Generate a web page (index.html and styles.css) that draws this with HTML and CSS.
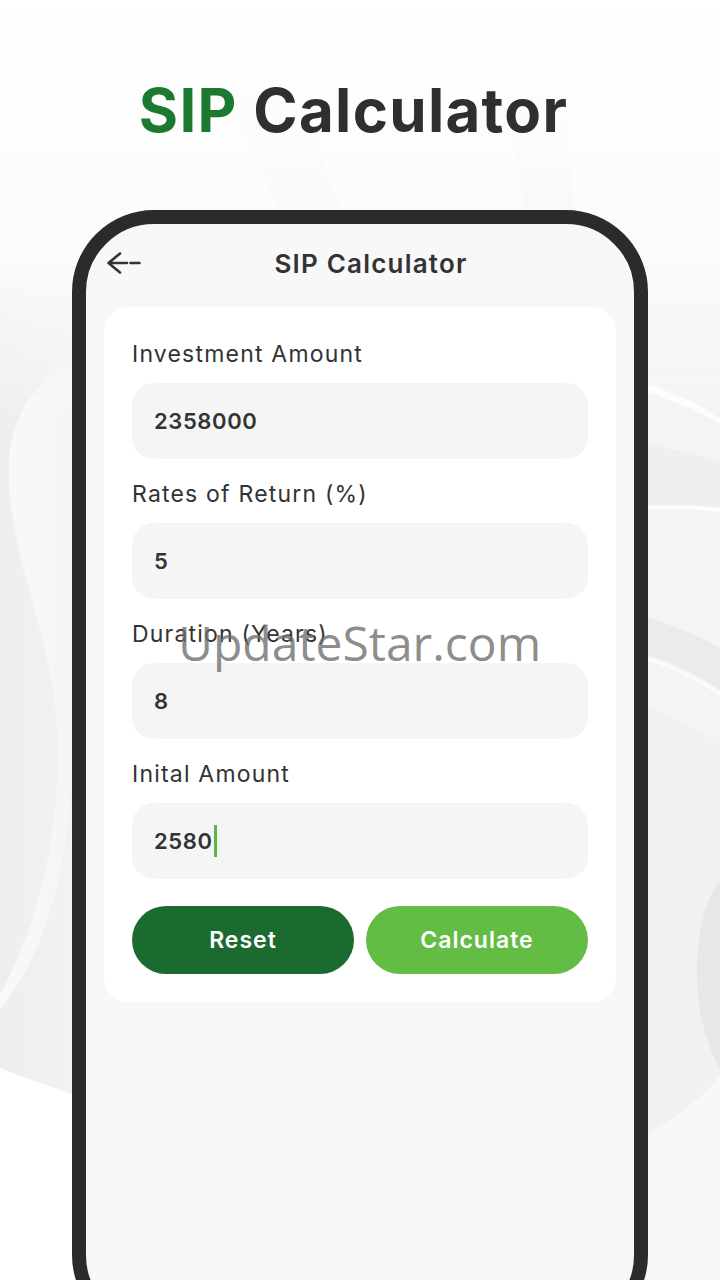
FILE: index.html
```html
<!DOCTYPE html>
<html lang="en">
<head>
<meta charset="utf-8">
<title>SIP Calculator</title>
<link rel="stylesheet" href="styles.css">
</head>
<body>
<svg class="bg" width="720" height="1280" viewBox="0 0 720 1280" aria-hidden="true">
  <defs>
    <linearGradient id="fadeGrad" gradientUnits="userSpaceOnUse" x1="0" y1="260" x2="0" y2="420">
      <stop offset="0" stop-color="#000"/>
      <stop offset="1" stop-color="#fff"/>
    </linearGradient>
    <mask id="fade">
      <rect width="720" height="1280" fill="url(#fadeGrad)"/>
    </mask>
    <linearGradient id="gt" x1="0" y1="0" x2="0" y2="1">
      <stop offset="0" stop-color="#ffffff"/>
      <stop offset="0.3" stop-color="#f9f9f9"/>
      <stop offset="1" stop-color="#f7f7f8"/>
    </linearGradient>
    <linearGradient id="gl" x1="0" y1="0" x2="1" y2="0">
      <stop offset="0" stop-color="#eeeeef"/>
      <stop offset="1" stop-color="#f3f3f4"/>
    </linearGradient>
    <linearGradient id="gs" x1="0" y1="0" x2="1" y2="0">
      <stop offset="0" stop-color="#f9f9f9"/>
      <stop offset="1" stop-color="#f5f5f6"/>
    </linearGradient>
    <linearGradient id="gd" x1="0" y1="0" x2="0" y2="1">
      <stop offset="0" stop-color="#ffffff" stop-opacity="0"/>
      <stop offset="1" stop-color="#f3f3f4"/>
    </linearGradient>
  </defs>
  <rect width="720" height="1280" fill="url(#gt)"/>
  <path d="M170 0 C210 60 250 140 300 260 L360 260 C320 150 280 60 250 0 Z" fill="url(#gd)" opacity="0.6"/>
  <path d="M470 0 C500 60 520 150 530 260 L580 260 C570 150 555 60 540 0 Z" fill="url(#gd)" opacity="0.6"/>
  <g mask="url(#fade)">
    <path d="M0 260 L90 260 L90 1100 C60 1090 30 1080 0 1068 Z" fill="url(#gl)"/>
    <path d="M72 362 C40 380 12 410 9 460 C5 560 60 640 58 760 C56 860 30 940 0 995 L0 1010 C40 960 70 880 72 760 Z" fill="url(#gs)"/>
    <path d="M0 1068 C30 1080 60 1090 90 1100 L90 1280 L0 1280 Z" fill="#ffffff"/>
    <path d="M630 260 L720 260 L720 1280 L630 1280 Z" fill="#f4f4f5"/>
    <path d="M630 378 C670 390 700 405 720 418 L720 424 C700 412 670 398 630 386 Z" fill="#fdfdfd"/>
    <path d="M630 440 C670 448 700 455 720 462 L720 508 C700 505 670 505 630 506 Z" fill="#efeff0"/>
    <path d="M630 506 C670 505 700 505 720 508 L720 512 C700 509 670 509 630 510 Z" fill="#fdfdfd"/>
    <path d="M630 612 C670 624 700 636 720 648 L720 690 C700 676 670 660 630 650 Z" fill="#ebebec"/>
    <path d="M630 652 C670 662 700 678 720 692 L720 696 C700 682 670 666 630 656 Z" fill="#fbfbfb"/>
    <path d="M630 700 C670 715 700 730 720 745 L720 880 C700 905 692 960 700 1010 C705 1040 715 1060 720 1070 L720 1280 L630 1280 Z" fill="#f1f1f2"/>
    <path d="M720 880 C700 905 692 960 700 1010 C705 1040 715 1060 720 1070 Z" fill="#e7e7e9"/>
    <path d="M630 1140 C670 1125 700 1100 720 1075 L720 1280 L630 1280 Z" fill="#f7f7f8"/>
  </g>
</svg>

<main class="page">
  <h1 class="hero"><span class="accent">SIP</span> Calculator</h1>

  <section class="phone">
    <div class="screen">
      <header class="appbar">
        <svg class="back" width="34" height="24" viewBox="0 0 34 24" aria-hidden="true">
          <path d="M13 2.5 L1.5 12 L13 21.5 M1.5 12 H20 M23.5 12 H32.5" fill="none" stroke="#333" stroke-width="2.6" stroke-linecap="round" stroke-linejoin="round"/>
        </svg>
        <div class="appbar-title">SIP Calculator</div>
      </header>

      <div class="card">
        <div class="field">
          <div class="label">Investment Amount</div>
          <div class="input">2358000</div>
        </div>
        <div class="field">
          <div class="label">Rates of Return (%)</div>
          <div class="input">5</div>
        </div>
        <div class="field">
          <div class="label">Duration (Years)</div>
          <div class="input">8</div>
        </div>
        <div class="field">
          <div class="label">Inital Amount</div>
          <div class="input">2580<span class="caret"></span></div>
        </div>
        <div class="actions">
          <button class="btn btn-reset">Reset</button>
          <button class="btn btn-calc">Calculate</button>
        </div>
      </div>
    </div>
  </section>

  <div class="watermark">UpdateStar.com</div>
</main>
</body>
</html>
```

FILE: styles.css
```css
* {
  box-sizing: border-box;
}

html, body {
  margin: 0;
  padding: 0;
}

body {
  width: 720px;
  height: 1280px;
  overflow: hidden;
  position: relative;
  background: #fbfbfb;
  font-family: "Inter", "Open Sans", "Liberation Sans", sans-serif;
  color: #333;
}

.bg {
  position: absolute;
  left: 0;
  top: 0;
  z-index: 0;
}

.page {
  position: relative;
  z-index: 1;
  display: flex;
  flex-direction: column;
  align-items: center;
}

.hero {
  margin: 74px 0 0;
  padding-right: 13px;
  height: 72px;
  line-height: 72px;
  font-size: 60px;
  font-weight: 700;
  letter-spacing: 1.3px;
  color: #2f2f2f;
}

.accent {
  color: #1b7a2f;
}

.phone {
  margin-top: 64px;
  width: 576px;
  height: 1127px;
  flex: none;
  border: 14px solid #2b2b2b;
  border-radius: 82px;
  background: #f8f8f8;
  overflow: hidden;
}

.screen {
  display: flex;
  flex-direction: column;
}

.appbar {
  height: 78px;
  display: flex;
  align-items: center;
  padding: 0 33px 0 21px;
}

.back {
  flex: none;
  display: block;
}

.appbar-title {
  flex: 1;
  text-align: center;
  font-size: 26px;
  font-weight: 600;
  letter-spacing: 1.2px;
  color: #333;
}

.card {
  margin: 5px 18px 0;
  background: #ffffff;
  border-radius: 24px;
  padding: 32px 28px 28px;
  display: flex;
  flex-direction: column;
}

.field {
  display: flex;
  flex-direction: column;
  margin-bottom: 20px;
}

.label {
  height: 30px;
  line-height: 30px;
  font-size: 23px;
  font-weight: 400;
  letter-spacing: 1.2px;
  color: #333;
  margin-bottom: 14px;
}

.input {
  height: 76px;
  border-radius: 22px;
  background: #f5f5f5;
  display: flex;
  align-items: center;
  padding-left: 22px;
  font-size: 22px;
  font-weight: 600;
  letter-spacing: 0.6px;
  color: #333;
}

.caret {
  display: inline-block;
  width: 3px;
  height: 32px;
  margin-left: 1px;
  background: #5cb843;
}

.actions {
  margin-top: 7px;
  display: grid;
  grid-template-columns: 1fr 1fr;
  gap: 12px;
}

.btn {
  height: 68px;
  border: none;
  border-radius: 34px;
  font-family: inherit;
  font-size: 23px;
  font-weight: 600;
  letter-spacing: 1px;
  color: #ffffff;
}

.btn-reset {
  background: #1b6b30;
}

.btn-calc {
  background: #63bc44;
}

.watermark {
  position: absolute;
  left: 178px;
  top: 611px;
  font-family: "Open Sans", "Liberation Sans", sans-serif;
  font-size: 48px;
  line-height: 64px;
  color: rgba(110, 110, 110, 0.8);
  white-space: nowrap;
}
```
